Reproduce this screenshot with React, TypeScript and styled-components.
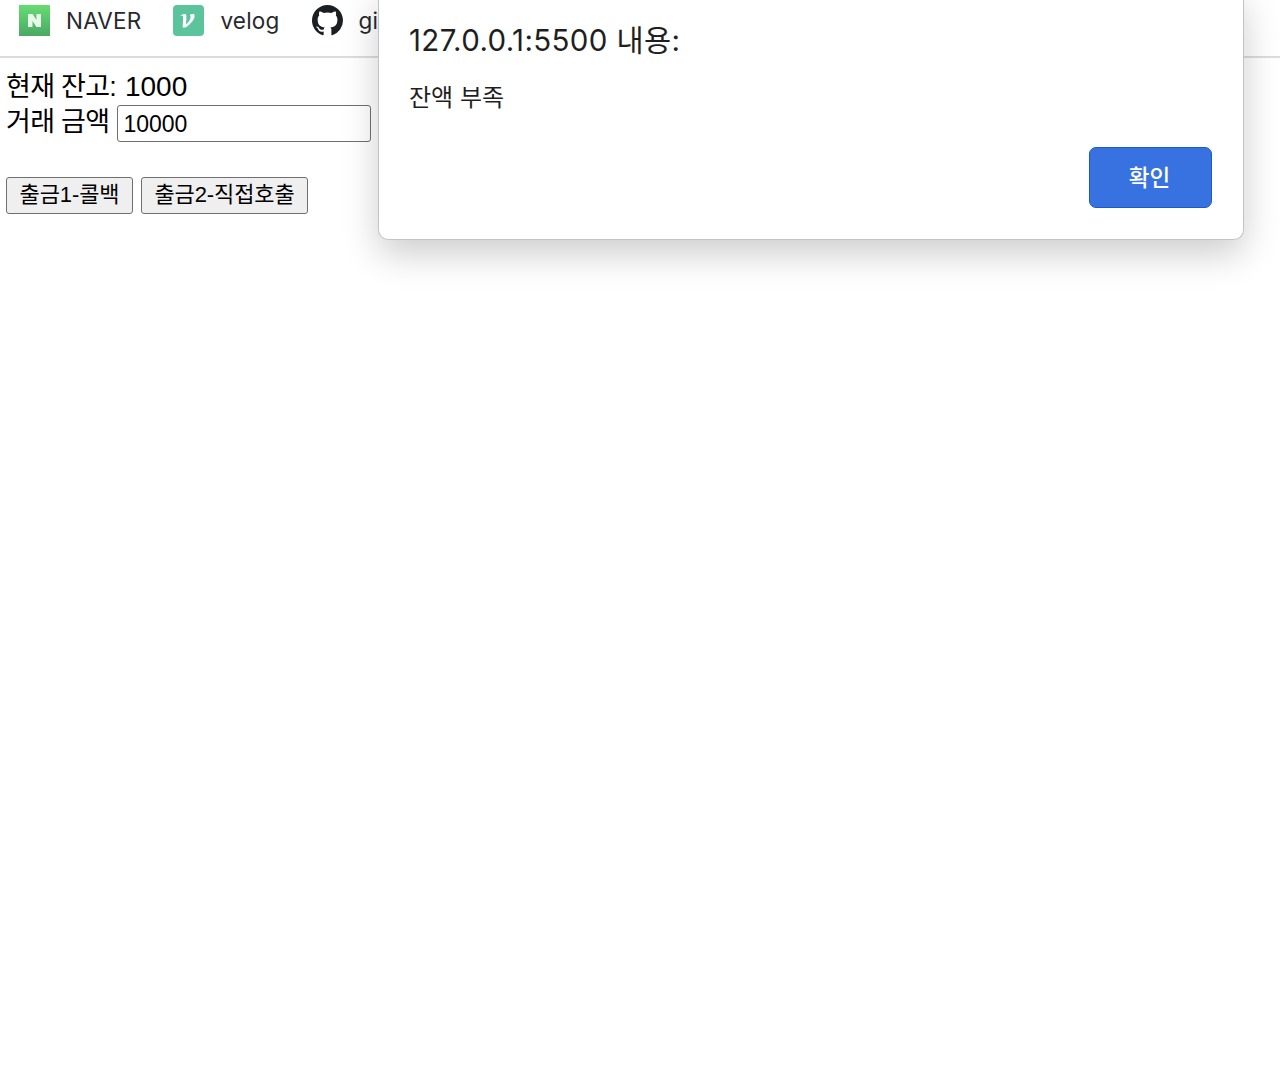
import React from "react";
import styled, { createGlobalStyle } from "styled-components";

const CJK = `"Liberation Sans", "Noto Sans CJK KR", sans-serif`;
const UI = `Inter, "Noto Sans CJK KR", sans-serif`;

const Global = createGlobalStyle`
  html, body { margin: 0; padding: 0; background: #fff; }
  body { font-family: ${CJK}; color: #000; width: 1280px; height: 1073px; overflow: hidden; }
`;

const Page = styled.div`
  position: relative;
  width: 1280px;
  height: 1073px;
  overflow: hidden;
`;

const BookmarkBar = styled.nav`
  height: 58px;
  box-sizing: border-box;
  border-bottom: 2px solid #dcdcdc;
  padding: 5px 0 0 19px;
`;

const BookmarkList = styled.div`
  width: 359px;
  overflow: hidden;
  display: flex;
  align-items: flex-start;
  gap: 32px;
`;

const Bookmark = styled.div`
  display: flex;
  flex: none;
  align-items: center;
  gap: 16px;
  height: 31px;
`;

const BookmarkLabel = styled.span`
  font-family: ${UI};
  font-size: 22.5px;
  color: #26292e;
  letter-spacing: 0.2px;
`;

const Main = styled.main`
  padding: 12px 0 0 6px;
`;

const BalanceLine = styled.div`
  font-size: 27px;
  line-height: 34px;
  letter-spacing: -0.7px;
`;

const BalanceValue = styled.span`
  margin-left: 2px;
  font-size: 28px;
  letter-spacing: 0;
`;

const AmountRow = styled.div`
  display: flex;
  align-items: flex-start;
  gap: 8px;
  height: 36px;
`;

const AmountLabel = styled.label`
  font-size: 27px;
  line-height: 36px;
  letter-spacing: -0.7px;
`;

const AmountInput = styled.input`
  box-sizing: border-box;
  width: 254px;
  height: 37px;
  margin-top: 1px;
  padding: 1px 5px 0;
  border: 1px solid #6f6f6f;
  border-radius: 3px;
  background: #fff;
  font-family: ${CJK};
  font-size: 23px;
  color: #000;
  outline: none;
`;

const ActionRow = styled.div`
  display: flex;
  gap: 8px;
  margin-top: 37px;
`;

const ActionButton = styled.button`
  box-sizing: border-box;
  height: 37px;
  padding: 0 12.5px 2px;
  border: 1px solid #6f6f6f;
  border-radius: 3px;
  background: #efefef;
  font-family: ${CJK};
  font-size: 22px;
  line-height: 30px;
  letter-spacing: -0.1px;
  color: #000;
  white-space: nowrap;
`;

const Dialog = styled.section`
  position: absolute;
  left: 378px;
  top: -10px;
  width: 866px;
  height: 250px;
  box-sizing: border-box;
  padding: 32px 31px 0 30px;
  background: #fff;
  border-radius: 0 0 10px 10px;
  border-right: 1px solid #c4c4c4;
  border-left: 1px solid #c4c4c4;
  border-bottom: 1px solid #c4c4c4;
  box-shadow: 0 14px 36px rgba(0, 0, 0, 0.2);
  display: flex;
  flex-direction: column;
`;

const DialogTitle = styled.h1`
  margin: 0;
  font-family: ${UI};
  font-weight: 400;
  font-size: 29.5px;
  line-height: 36px;
  letter-spacing: 0.36px;
  color: #1f1f1f;
`;

const DialogMessage = styled.p`
  margin: 25px 0 0;
  font-family: ${UI};
  font-size: 24px;
  line-height: 30px;
  color: #1f1f1f;
`;

const DialogFooter = styled.div`
  margin-top: 34px;
  display: flex;
  justify-content: flex-end;
`;

const ConfirmButton = styled.button`
  box-sizing: border-box;
  width: 123px;
  height: 61px;
  padding: 0 2px 3px 0;
  border: 1px solid #1a5bc9;
  border-radius: 7px;
  background: #3872e0;
  color: #fff;
  font-family: ${UI};
  font-size: 22.5px;
  font-weight: 500;
`;

const NaverIcon = () => (
  <svg width="31" height="31" viewBox="0 0 31 31">
    <defs>
      <linearGradient id="nv" x1="0" y1="0" x2="0" y2="1">
        <stop offset="0" stopColor="#66dc72" />
        <stop offset="1" stopColor="#4aa964" />
      </linearGradient>
    </defs>
    <rect width="31" height="31" fill="url(#nv)" />
    <path d="M9 9h4.6l3.9 6V9H22v13h-4.5l-4-6.1V22H9z" fill="#e8f8ea" />
  </svg>
);

const VelogIcon = () => (
  <svg width="31" height="31" viewBox="0 0 31 31">
    <rect width="31" height="31" rx="4" fill="#5cc49c" />
    <path
      d="M7.5 10.5c2-1.500 4.800-2 5.500-1 .6.900.5 2.800.3 5l-.4 5c2.300-1.800 4-4.200 4.600-6.500.3-1.200 0-2.200-.6-3 .9-.8 2.700-1.100 4.300-.8 1 2.200 0 4.700-1.800 7-1.900 2.600-4.300 4.800-6.800 6.300h-3l.6-9.700c.1-1.500-.1-2.300-.8-2.400-.5 0-1 .2-1.700.6z"
      fill="#fff"
    />
  </svg>
);

const GithubIcon = () => (
  <svg width="31" height="31" viewBox="0 0 16 16">
    <path
      fill="#1b1f24"
      d="M8 0C3.58 0 0 3.58 0 8c0 3.54 2.29 6.53 5.47 7.59.4.07.55-.17.55-.38 0-.19-.01-.82-.01-1.49-2.01.37-2.53-.49-2.69-.94-.09-.23-.48-.94-.82-1.13-.28-.15-.68-.52-.01-.53.63-.01 1.08.58 1.23.82.72 1.21 1.87.87 2.33.66.07-.52.28-.87.51-1.07-1.78-.2-3.64-.89-3.64-3.95 0-.87.31-1.59.82-2.15-.08-.2-.36-1.02.08-2.12 0 0 .67-.21 2.2.82.64-.18 1.32-.27 2-.27.68 0 1.36.09 2 .27 1.53-1.04 2.2-.82 2.2-.82.44 1.1.16 1.92.08 2.12.51.56.82 1.27.82 2.15 0 3.07-1.87 3.75-3.65 3.95.29.25.54.73.54 1.48 0 1.07-.01 1.93-.01 2.2 0 .21.15.46.55.38A8.013 8.013 0 0 0 16 8c0-4.42-3.58-8-8-8z"
    />
  </svg>
);

export default function App() {
  return (
    <Page>
      <Global />
      <BookmarkBar>
        <BookmarkList>
          <Bookmark>
            <NaverIcon />
            <BookmarkLabel>NAVER</BookmarkLabel>
          </Bookmark>
          <Bookmark>
            <VelogIcon />
            <BookmarkLabel>velog</BookmarkLabel>
          </Bookmark>
          <Bookmark>
            <GithubIcon />
            <BookmarkLabel>github</BookmarkLabel>
          </Bookmark>
        </BookmarkList>
      </BookmarkBar>
      <Main>
        <BalanceLine>
          현재 잔고: <BalanceValue>1000</BalanceValue>
        </BalanceLine>
        <AmountRow>
          <AmountLabel>거래 금액</AmountLabel>
          <AmountInput defaultValue="10000" />
        </AmountRow>
        <ActionRow>
          <ActionButton>출금1-콜백</ActionButton>
          <ActionButton>출금2-직접호출</ActionButton>
        </ActionRow>
      </Main>
      <Dialog>
        <DialogTitle>127.0.0.1:5500 내용:</DialogTitle>
        <DialogMessage>잔액 부족</DialogMessage>
        <DialogFooter>
          <ConfirmButton>확인</ConfirmButton>
        </DialogFooter>
      </Dialog>
    </Page>
  );
}
